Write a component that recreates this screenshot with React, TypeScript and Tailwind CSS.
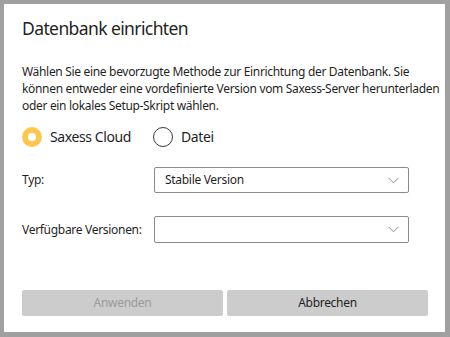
import { useState } from "react";

function Chevron() {
  return (
    <svg width="11" height="7" viewBox="0 0 11 7" fill="none">
      <path d="M0.5 0.8 L5.5 5.8 L10.5 0.8" stroke="#8a8a8a" strokeWidth="1" />
    </svg>
  );
}

function Radio({ checked, label, onClick }: { checked: boolean; label: string; onClick: () => void }) {
  return (
    <button type="button" onClick={onClick} className="flex items-center gap-2 cursor-pointer">
      {checked ? (
        <span className="flex h-5 w-5 items-center justify-center rounded-full bg-[#fdc74f]">
          <span className="h-2 w-2 rounded-full bg-white" />
        </span>
      ) : (
        <span className="h-5 w-5 rounded-full border border-[#3a3a3a] bg-white" />
      )}
      <span className="text-[14px] leading-5 tracking-[-0.4px] text-[#1f1f1f]">{label}</span>
    </button>
  );
}

export default function App() {
  const [method, setMethod] = useState<"cloud" | "file">("cloud");

  return (
    <div
      className="h-[337px] w-[450px] bg-[#a0a0a0] pt-1 pl-1 pr-[5px] pb-[5px]"
      style={{ fontFamily: '"Noto Sans", "Open Sans", sans-serif' }}
    >
      <div className="flex h-full w-full flex-col bg-white pl-[18px] pr-[17px] pt-[10px]">
        <h1 className="text-[17.5px] leading-[28px] tracking-[-0.6px] text-[#1f1f1f]">Datenbank einrichten</h1>

        <p className="mt-[21px] whitespace-nowrap text-[12px] leading-[17px] tracking-[-0.32px] text-[#1f1f1f]">
          Wählen Sie eine bevorzugte Methode zur Einrichtung der Datenbank. Sie
          <br />
          können entweder eine vordefinierte Version vom Saxess-Server herunterladen
          <br />
          oder ein lokales Setup-Skript wählen.
        </p>

        <div className="mt-[13px] flex items-center gap-[22px]">
          <Radio checked={method === "cloud"} label="Saxess Cloud" onClick={() => setMethod("cloud")} />
          <Radio checked={method === "file"} label="Datei" onClick={() => setMethod("file")} />
        </div>

        <div className="mt-5 flex items-center tracking-[-0.3px]">
          <span className="w-[132px] text-[12px] text-[#1f1f1f]">Typ:</span>
          <div className="flex h-[26px] w-[255px] items-center justify-between rounded-[2px] border border-[#8a8a8a] pl-[10px] pr-[9px]">
            <span className="text-[12px] text-[#1f1f1f]">Stabile Version</span>
            <Chevron />
          </div>
        </div>

        <div className="mt-[23px] flex items-center tracking-[-0.3px]">
          <span className="w-[132px] text-[12px] text-[#1f1f1f]">Verfügbare Versionen:</span>
          <div className="flex h-[27px] w-[255px] items-center justify-end rounded-[2px] border border-[#8a8a8a] pr-[9px]">
            <Chevron />
          </div>
        </div>

        <div className="mt-[47px] flex gap-1 tracking-[-0.3px]">
          <button
            type="button"
            disabled
            className="h-[26px] w-[201px] rounded-[2px] bg-[#cccccc] text-[12px] text-[#9b9b9b]"
          >
            Anwenden
          </button>
          <button
            type="button"
            className="h-[26px] w-[201px] rounded-[2px] bg-[#cccccc] text-[12px] text-[#1f1f1f] cursor-pointer"
          >
            Abbrechen
          </button>
        </div>
      </div>
    </div>
  );
}
